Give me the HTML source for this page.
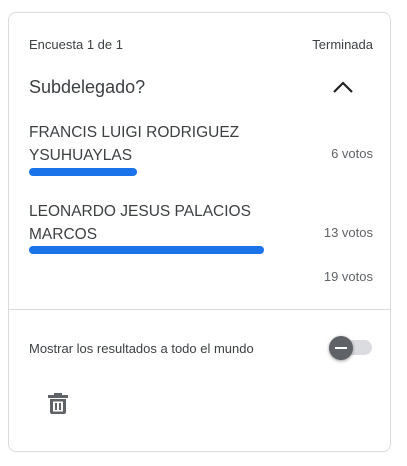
<html><head><style>
body{margin:0;width:407px;height:466px;background:#fff;font-family:"Liberation Sans",sans-serif;position:relative;overflow:hidden}
.card{position:absolute;left:8px;top:12px;width:383px;height:440px;border:1px solid #dadce0;border-radius:8px;box-sizing:border-box}
.t{position:absolute;white-space:nowrap}
.bar{position:absolute;height:8px;background:#1a73e8;border-radius:4px}
</style></head><body>
<div class="card"></div>
<div class="t" style="left:29px;top:37px;font-size:13px;color:#3c4043">Encuesta 1 de 1</div>
<div class="t" style="right:34px;top:37px;font-size:13px;color:#3c4043">Terminada</div>
<div class="t" style="left:29px;top:77px;font-size:18px;color:#3c4043">Subdelegado?</div>
<svg style="position:absolute;left:331px;top:77px" width="24" height="20" viewBox="0 0 24 20"><path d="M3 15 L12 6 L21 15" fill="none" stroke="#202124" stroke-width="2.2"/></svg>
<div class="t" style="left:29px;top:121px;font-size:15.5px;line-height:23px;color:#3c4043">FRANCIS LUIGI RODRIGUEZ<br>YSUHUAYLAS</div>
<div class="t" style="right:34px;top:146px;font-size:13px;color:#5f6368">6 votos</div>
<div class="bar" style="left:29px;top:168px;width:108px"></div>
<div class="t" style="left:29px;top:200px;font-size:15.5px;line-height:23px;color:#3c4043">LEONARDO JESUS PALACIOS<br>MARCOS</div>
<div class="t" style="right:34px;top:225px;font-size:13px;color:#5f6368">13 votos</div>
<div class="bar" style="left:29px;top:246px;width:235px"></div>
<div class="t" style="right:34px;top:269px;font-size:13px;color:#5f6368">19 votos</div>
<div style="position:absolute;left:9px;top:309px;width:381px;height:1px;background:#dadce0"></div>
<div class="t" style="left:29px;top:341px;font-size:13px;color:#3c4043">Mostrar los resultados a todo el mundo</div>
<div style="position:absolute;left:336px;top:340px;width:36px;height:15px;border-radius:8px;background:#dadce0"></div>
<div style="position:absolute;left:329px;top:336px;width:24px;height:24px;border-radius:50%;background:#5f6368;box-shadow:0 1px 3px rgba(0,0,0,.4)"></div>
<div style="position:absolute;left:335px;top:347px;width:12px;height:2px;background:#fff"></div>
<svg style="position:absolute;left:47px;top:392px" width="22" height="24" viewBox="0 0 22 24"><path fill="#5f6368" d="M7 1h8v2h6v3H1V3h6zM3 7h16v13c0 1.2-.8 2-2 2H5c-1.2 0-2-.8-2-2zm3 2.5v10h10v-10zm2 1.5h2v7H8zm4 0h2v7h-2z"/></svg>
</body></html>
